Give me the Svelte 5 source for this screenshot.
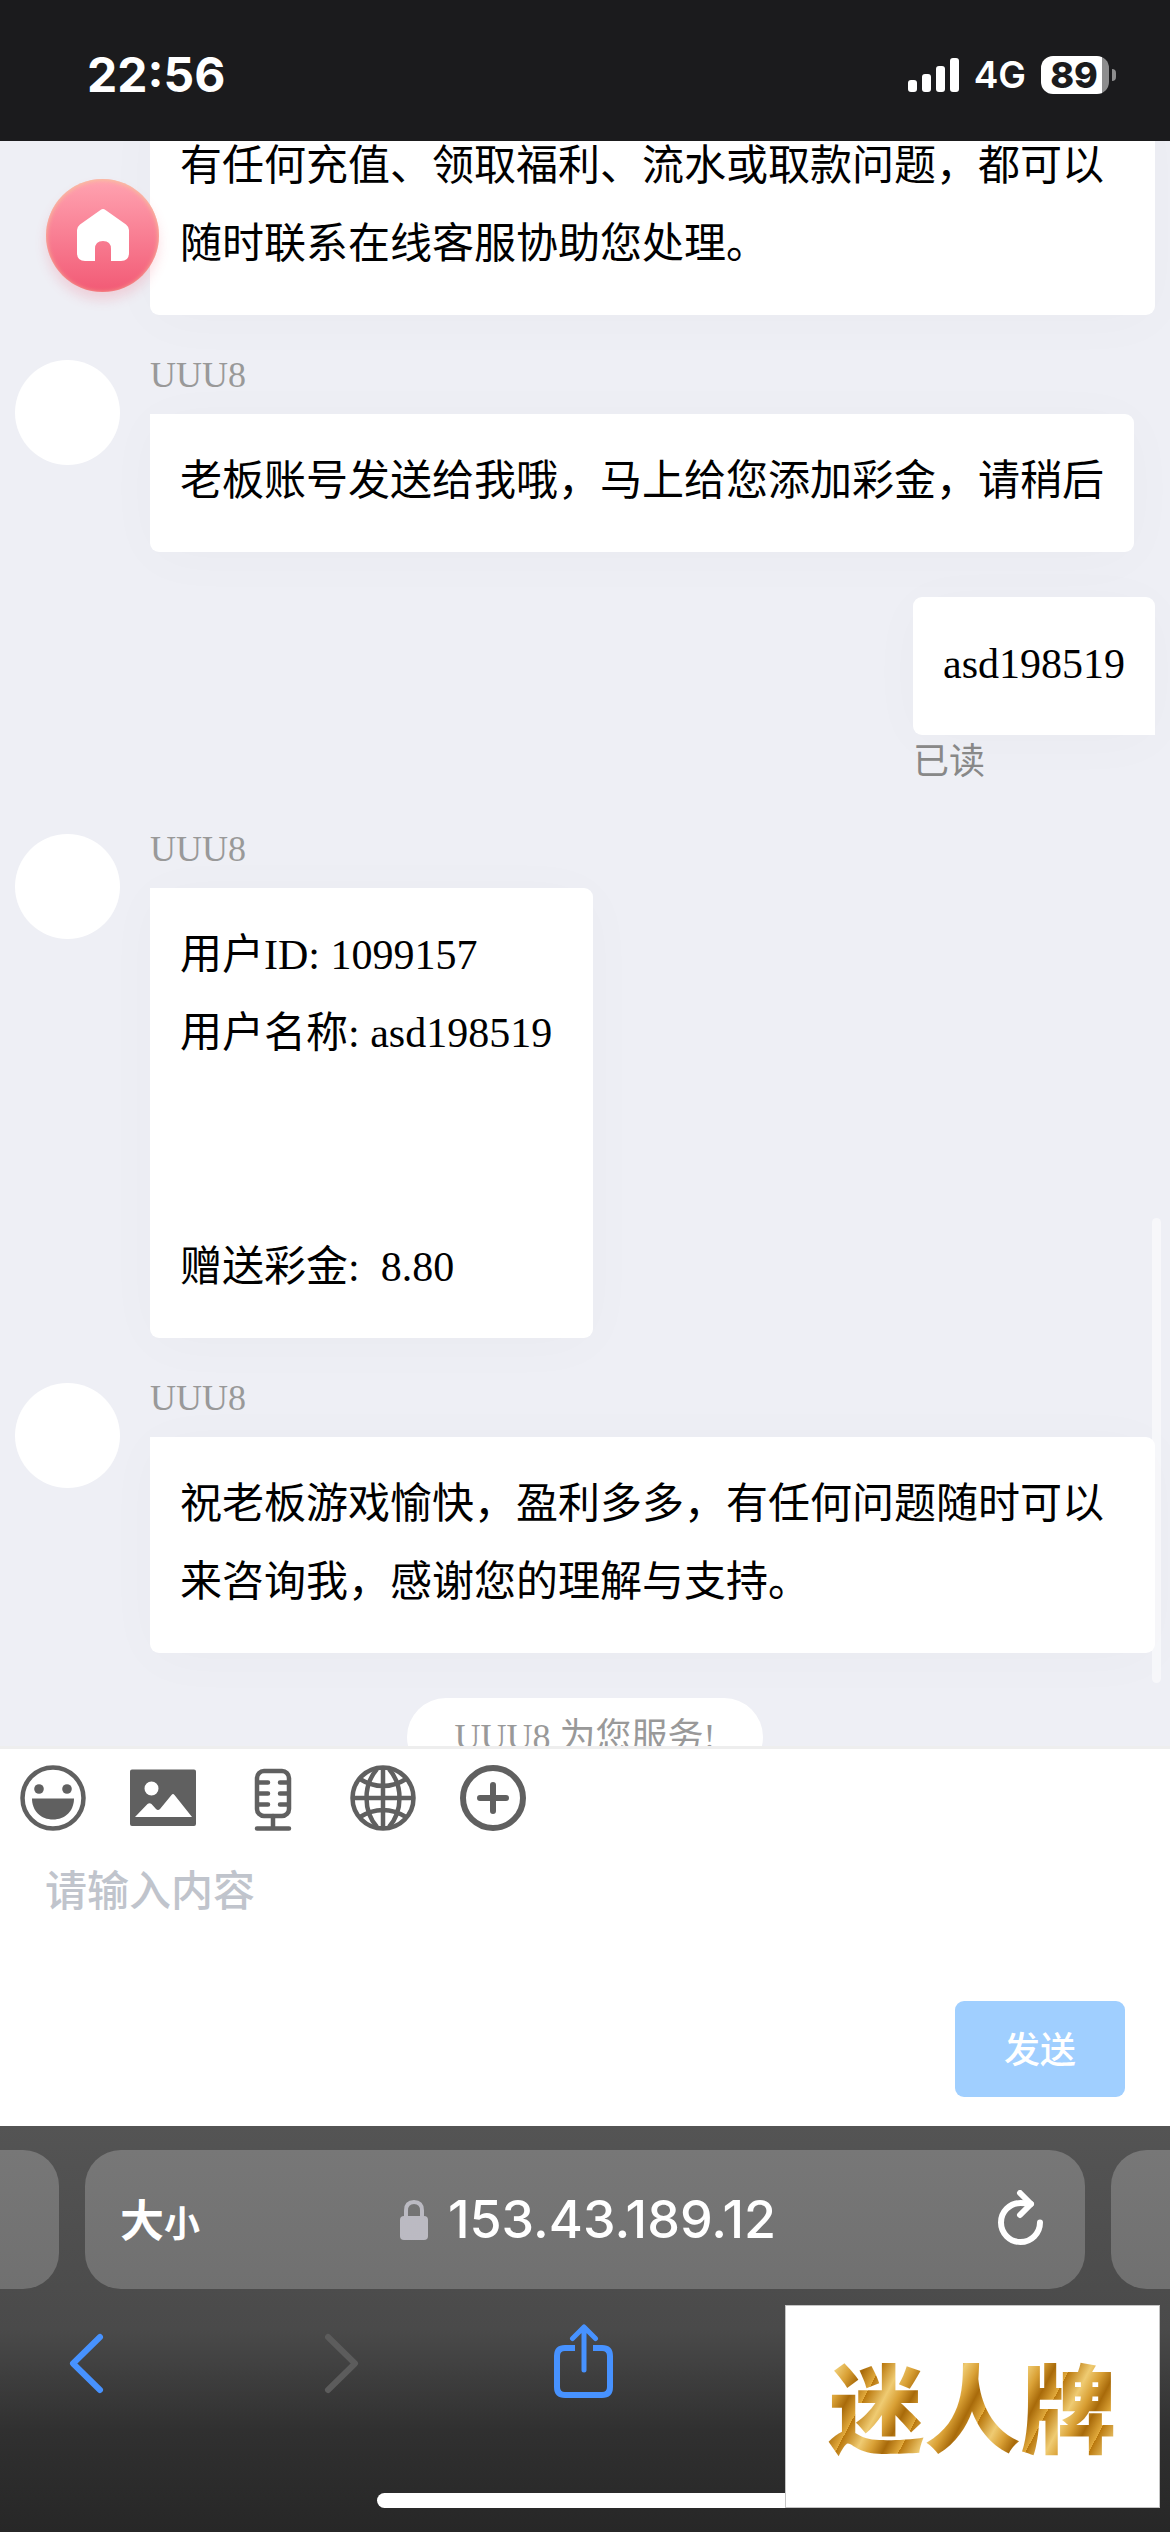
<script lang="ts">
  type Message = { from: 'agent' | 'me'; name?: string; text: string; status?: string }

  const messages: Message[] = [
    {
      from: 'agent',
      text: '有任何充值、领取福利、流水或取款问题，都可以随时联系在线客服协助您处理。',
    },
    {
      from: 'agent',
      name: 'UUU8',
      text: '老板账号发送给我哦，马上给您添加彩金，请稍后',
    },
    { from: 'me', text: 'asd198519', status: '已读' },
    {
      from: 'agent',
      name: 'UUU8',
      text: '用户ID: 1099157\n用户名称: asd198519\u00a0\n\n\n赠送彩金:\u00a0 8.80',
    },
    {
      from: 'agent',
      name: 'UUU8',
      text: '祝老板游戏愉快，盈利多多，有任何问题随时可以来咨询我，感谢您的理解与支持。',
    },
  ]

  let draft = ''
</script>

<div class="page" lang="zh-CN">
  <header class="status-bar">
    <time>22:56</time>
    <div class="status-icons">
      <svg class="signal" viewBox="0 0 51 34" aria-hidden="true">
        <rect x="0" y="22" width="9" height="12" rx="3" />
        <rect x="14" y="16" width="9" height="18" rx="3" />
        <rect x="28" y="8" width="9" height="26" rx="3" />
        <rect x="42" y="0" width="9" height="34" rx="3" />
      </svg>
      <span class="network">4G</span>
      <span class="battery"><span class="level">89</span></span>
    </div>
  </header>

  <main class="chat">
    <div class="messages">
      {#each messages as { from, name, text, status }}
        <article class="message {from}">
          {#if name}<div class="avatar"></div>{/if}
          <div class="body">
            {#if name}<div class="name">{name}</div>{/if}
            <div class="bubble">{text}</div>
            {#if status}<div class="status">{status}</div>{/if}
          </div>
        </article>
      {/each}
      <div class="notice">UUU8 为您服务!</div>
    </div>
    <div class="thumb"></div>
    <button class="home" aria-label="首页">
      <svg viewBox="0 0 52 52" aria-hidden="true">
        <path
          d="M23.500 1Q26-1 28.500 1L49 15.500Q52 18 52 21V44Q52 52 44 52H34V40Q34 32 26 32T18 40V52H8Q0 52 0 44V21Q0 18 3 15.500Z"
          fill="#fff" />
      </svg>
    </button>
  </main>

  <form class="composer" on:submit|preventDefault>
    <div class="tools">
      <button type="button" aria-label="表情">
        <svg viewBox="0 0 66 66">
          <circle cx="33" cy="33" r="30.500" class="line" />
          <circle cx="19" cy="24" r="4.800" />
          <circle cx="47" cy="24" r="4.800" />
          <path d="M12 33.500H54C54 46 45 54.500 33 54.500S12 46 12 33.500Z" />
        </svg>
      </button>
      <button type="button" aria-label="图片">
        <svg viewBox="0 0 66 66">
          <path
            fill-rule="evenodd"
            d="M2 4.500H64Q66 4.500 66 6.500V59Q66 61 64 61H2Q0 61 0 59V6.500Q0 4.500 2 4.500ZM21.500 16.500A7 7 0 1 0 21.500 30.500A7 7 0 1 0 21.500 16.500ZM5 52H62L44.500 30Q43 28 41.500 30L30 44Q28 46 26 44L21.500 39Q19.500 37.500 17.500 39Z" />
        </svg>
      </button>
      <button type="button" aria-label="语音">
        <svg viewBox="0 0 66 66">
          <rect x="17" y="6" width="32" height="45" rx="7" class="line" />
          <path
            class="line round"
            d="M18 17.500H28M18 28.500H28M18 39.500H28M48 17.500H40M48 28.500H40M48 39.500H40M17 63.500H49M33 51V63" />
        </svg>
      </button>
      <button type="button" aria-label="语言">
        <svg viewBox="0 0 66 66">
          <circle cx="33" cy="33" r="30.500" class="line" />
          <path
            class="line"
            d="M33 2V64M2 33H64M27 4C13 20 13 46 27 62M39 4C53 20 53 46 39 62M9 13.500Q33 28.500 57 13.500M9 52.500Q33 37.500 57 52.500" />
        </svg>
      </button>
      <button type="button" aria-label="更多">
        <svg viewBox="0 0 66 66">
          <circle cx="33" cy="33" r="30" class="line bold" />
          <path class="line bold round" d="M33 20V46M20 33H46" />
        </svg>
      </button>
    </div>
    <textarea bind:value={draft} placeholder="请输入内容" aria-label="请输入内容"></textarea>
    <button class="send">发送</button>
  </form>

  <footer class="browser">
    <div class="tabs">
      <div class="tab side left"></div>
      <div class="tab address">
        <button class="text-size" aria-label="大小">大<small>小</small></button>
        <div class="host">
          <svg viewBox="0 0 28 40" aria-hidden="true">
            <path d="M6 18V10.500Q6 2 14 2T22 10.500V18" fill="none" stroke="#bbbac2" stroke-width="4" />
            <rect y="16" width="28" height="24" rx="4" fill="#bbbac2" />
          </svg>
          <span>153.43.189.12</span>
        </div>
        <button class="reload" aria-label="重新载入">
          <svg viewBox="0 0 46 60">
            <path d="M33 14Q28 13 22.500 13A19.500 19.500 0 1 0 42 32.500" />
            <path d="M22 3L33 14L22 25" />
          </svg>
        </button>
      </div>
      <div class="tab side right"></div>
    </div>
    <nav>
      <button aria-label="后退">
        <svg viewBox="0 0 74 74"><path d="M45 13L18 39.500L45 66" /></svg>
      </button>
      <button aria-label="前进" disabled>
        <svg viewBox="0 0 74 74"><path d="M27 13L54 39.500L27 66" /></svg>
      </button>
      <button aria-label="分享">
        <svg viewBox="0 0 74 74">
          <path class="tray" d="M28 24H18Q10 24 10 32V63Q10 71 18 71H55Q63 71 63 63V32Q63 24 55 24H46" />
          <path d="M37 46V4M25.500 14.500L37 3L48.500 14.500" stroke-width="5" />
        </svg>
      </button>
    </nav>
    <div class="indicator"></div>
    <div class="brand">迷人牌</div>
  </footer>
</div>

<style>
  :global(body) {
    margin: 0;
  }

  .page {
    display: flex;
    flex-direction: column;
    height: 100vh;
    overflow: hidden;
    font-family: 'Liberation Serif', 'Noto Sans CJK SC', serif;
    background: #fff;
  }

  button {
    padding: 0;
    border: none;
    background: none;
    font: inherit;
    color: inherit;
  }

  svg {
    display: block;
  }

  .status-bar {
    display: flex;
    flex: none;
    align-items: center;
    justify-content: space-between;
    height: 141px;
    padding: 8px 61px 0 87px;
    box-sizing: border-box;
    background: #1b1b1d;
    color: #fff;
    font-family: Inter, sans-serif;
  }

  time {
    font-size: 48px;
    font-weight: 700;
  }

  .status-icons {
    display: flex;
    align-items: center;
    gap: 15px;
  }

  .signal {
    width: 51px;
    height: 34px;
    fill: #fff;
  }

  .network {
    font-size: 37px;
    font-weight: 600;
  }

  .battery {
    position: relative;
    width: 68px;
    height: 38px;
    border-radius: 12px;
    background: linear-gradient(90deg, #fff 61px, #8d8d8e 61px);
  }

  .battery::after {
    content: '';
    position: absolute;
    left: 71px;
    top: 13px;
    width: 4px;
    height: 12px;
    border-radius: 0 6px 6px 0;
    background: #8d8d8e;
  }

  .level {
    display: block;
    width: 66px;
    line-height: 38px;
    text-align: center;
    font-size: 36px;
    font-weight: 800;
    color: #1b1b1d;
  }

  .chat {
    position: relative;
    flex: 1;
    min-height: 0;
    overflow: hidden;
    background: #eeeff5;
  }

  .messages {
    display: flex;
    flex-direction: column;
    gap: 45px;
    /* scrolled into the first message */
    margin-top: -42px;
    padding: 0 15px;
  }

  .message {
    display: flex;
    position: relative;
    padding-left: 135px;
  }

  .message.me {
    justify-content: flex-end;
  }

  .avatar {
    width: 105px;
    height: 105px;
    margin-left: -135px;
    margin-right: 30px;
    flex: none;
    border-radius: 50%;
    background: #fff;
  }

  .name {
    margin-bottom: 24px;
    font-size: 36px;
    line-height: 30px;
    color: #999;
  }

  .bubble {
    width: fit-content;
    padding: 28px 30px 32px;
    border-radius: 9px;
    background: #fff;
    box-shadow: 0 6px 60px rgba(0, 0, 0, 0.025);
    font-size: 42px;
    line-height: 78px;
    white-space: pre-wrap;
    color: #000;
  }

  .agent .bubble {
    border-top-left-radius: 0;
  }

  .me .bubble {
    border-bottom-right-radius: 0;
  }

  .status {
    font-size: 36px;
    line-height: 54px;
    color: #888;
  }

  .notice {
    align-self: center;
    padding: 0 48px;
    border-radius: 42px;
    background: #fff;
    font-size: 36px;
    line-height: 78px;
    color: #999;
  }

  .thumb {
    position: absolute;
    right: 9px;
    bottom: 63px;
    width: 9px;
    height: 465px;
    border-radius: 5px;
    background: rgba(255, 255, 255, 0.5);
  }

  .home {
    position: absolute;
    left: 46px;
    top: 38px;
    display: grid;
    place-items: center;
    width: 113px;
    height: 113px;
    padding-bottom: 2px;
    box-sizing: border-box;
    border-radius: 50%;
    background: linear-gradient(#ffa3b1, #f25a75);
    box-shadow: inset 0 1px 5px #f6c79a, 0 8px 12px rgba(242, 90, 117, 0.2);
  }

  .home svg {
    width: 52px;
    height: 52px;
  }

  .composer {
    display: flex;
    flex: none;
    flex-direction: column;
    padding-bottom: 29px;
    border-top: 3px solid #eee;
    background: #fff;
  }

  .tools {
    display: flex;
    gap: 44px;
    padding: 16px 20px 18px;
  }

  .tools svg {
    width: 66px;
    height: 66px;
    fill: #606060;
  }

  .tools .line {
    fill: none;
    stroke: #606060;
    stroke-width: 4.5;
  }

  .tools .bold {
    stroke-width: 6;
  }

  .tools .round {
    stroke-linecap: round;
  }

  textarea {
    height: 152px;
    box-sizing: border-box;
    padding: 9px 45px;
    border: none;
    outline: none;
    resize: none;
    background: none;
    font-family: 'Noto Sans CJK SC', sans-serif;
    font-size: 42px;
    font-weight: 500;
    line-height: 60px;
  }

  textarea::placeholder {
    color: #c0c4cc;
    opacity: 1;
  }

  .send {
    align-self: flex-end;
    width: 170px;
    height: 96px;
    margin-right: 45px;
    padding-bottom: 4px;
    border-radius: 9px;
    background: #a0cfff;
    font-family: 'Noto Sans CJK SC', sans-serif;
    font-size: 36px;
    font-weight: 500;
    color: #fff;
  }

  .browser {
    position: relative;
    flex: none;
    padding: 24px 0;
    background: linear-gradient(#545454, #4a4a4a 50%, #303030 75%, #272727);
    color: #fff;
  }

  .tabs {
    display: flex;
    gap: 26px;
  }

  .tab {
    height: 139px;
    border-radius: 36px;
    background: linear-gradient(#777, #707070);
  }

  .side {
    width: 59px;
    flex: none;
  }

  .left {
    border-top-left-radius: 0;
    border-bottom-left-radius: 0;
  }

  .right {
    border-top-right-radius: 0;
    border-bottom-right-radius: 0;
  }

  .address {
    display: grid;
    flex: 1;
    grid-template-columns: 1fr auto 1fr;
    align-items: center;
    padding: 0 41px 0 35px;
  }

  .text-size {
    justify-self: start;
    font-family: 'Noto Sans CJK SC', sans-serif;
    font-size: 44px;
    font-weight: 700;
    line-height: 60px;
  }

  .text-size small {
    font-size: 36px;
  }

  .host {
    display: flex;
    align-items: center;
    gap: 20px;
    padding-left: 12px;
    font-family: Inter, sans-serif;
    font-size: 52px;
    font-weight: 500;
  }

  .host svg {
    width: 28px;
    height: 40px;
  }

  .reload {
    justify-self: end;
  }

  .reload svg {
    width: 46px;
    height: 60px;
    fill: none;
    stroke: #fff;
    stroke-width: 6;
    stroke-linecap: round;
    stroke-linejoin: round;
  }

  nav {
    display: flex;
    gap: 172px;
    padding: 35px 55px 95px;
  }

  nav svg {
    width: 74px;
    height: 74px;
    fill: none;
    stroke: #4792ff;
    stroke-width: 6;
    stroke-linecap: round;
    stroke-linejoin: round;
  }

  nav .tray {
    stroke-linecap: butt;
  }

  nav button:disabled svg {
    stroke: #5c5c5c;
  }

  .indicator {
    width: 416px;
    height: 15px;
    margin: 0 auto;
    border-radius: 8px;
    background: #fff;
  }

  .brand {
    position: absolute;
    right: 10px;
    bottom: 24px;
    width: 375px;
    height: 203px;
    box-sizing: border-box;
    border: 1px solid #c4c4c4;
    background:
      repeating-linear-gradient(118deg, #b9770c 0, #efcb72 18px, #d9a035 30px, #a86a0a 42px, #e2aa3c 56px) text,
      #fff;
    font-family: 'Noto Sans CJK SC', sans-serif;
    font-size: 96px;
    font-weight: 900;
    line-height: 196px;
    text-align: center;
    color: transparent;
  }
</style>
